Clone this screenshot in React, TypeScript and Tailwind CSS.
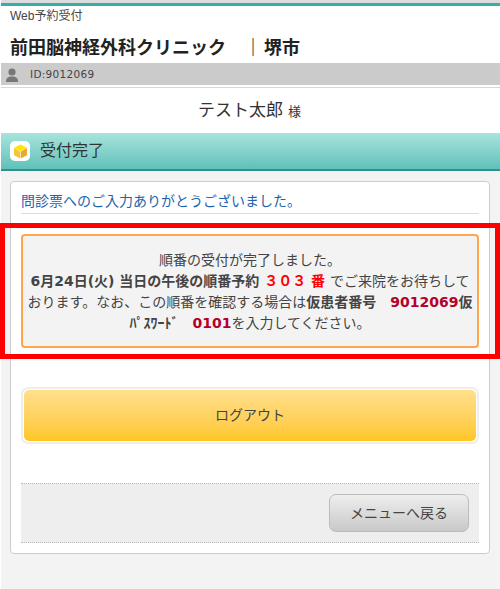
const jp = "font-['DejaVu_Sans','Noto_Sans_CJK_JP',sans-serif]";

const App = () => {
  return (
    <div className={`relative w-[500px] h-[589px] overflow-hidden bg-white pl-px text-[#333] ${jp}`}>
      <div className="flex h-full flex-col bg-[#f3f3f3]">
        {/* header */}
        <header className="bg-white">
          <div className="h-[6px] border-t-[3px] border-t-[#dcdcdc] bg-[#33aea8]" />
          <p className="h-[20px] pl-[9px] text-[12px] leading-[20px] text-[#444]">
            <span className="font-['Liberation_Sans']">Web</span>予約受付
          </p>
          <h1 className="h-[37px] pl-[9px] text-[18px] font-bold leading-[44px] text-[#222]">
            前田脳神経外科クリニック<span className="ml-[18px]">｜</span>
            <span className="ml-[2px]">堺市</span>
          </h1>
          <div className="flex h-[22px] items-center bg-[#cbcbcb]">
            <svg viewBox="0 0 14 14" className="ml-[4px] h-[14px] w-[14px] translate-y-[1px]">
              <circle cx="7" cy="4" r="3.6" fill="#777" />
              <path d="M1 14c0-4 2-5.500 6-5.500s6 1.500 6 5.500z" fill="#777" />
            </svg>
            <span className="ml-[11px] translate-y-[1px] text-[10.500px] tracking-[0.3px] text-[#444]">
              ID:9012069
            </span>
          </div>
          <div className="h-[2px] bg-white" />
          <div className="h-px bg-[#d8d8d8]" />
          <div className="flex h-[45px] items-center justify-center pr-[2px] text-[17px] text-[#333]">
            テスト太郎<span className="ml-[5px] translate-y-[1px] text-[13px]">様</span>
          </div>
        </header>

        {/* section title */}
        <div className="flex h-[38px] items-center border-b-[2px] border-b-[#2c928c] bg-gradient-to-b from-[#a7e4dd] to-[#5fc1ba] pl-[9px]">
          <span className="flex h-[20px] w-[20px] items-center justify-center rounded-[5px] bg-white">
            <svg viewBox="0 0 14 14" className="h-[15px] w-[15px]">
              <path d="M7 .5 13 3.500 7 6.800 1 3.500z" fill="#ffe600" />
              <path d="M1 3.800 6.700 7v6.500L1 10.500z" fill="#f7c531" />
              <path d="M13 3.800 7.300 7v6.500l5.700-3z" fill="#e8a92a" />
            </svg>
          </span>
          <span className="ml-[10px] text-[16px] text-[#333]">受付完了</span>
        </div>

        {/* card */}
        <main className="ml-[9px] mr-[10px] mt-[10px] flex h-[373px] flex-col rounded-[4px] border border-[#ccc] bg-white px-[10px]">
          <p className="mt-[9px] h-[23px] border-b border-b-[#ddd] text-[14px] leading-[20px] text-[#1f63ad]">
            問診票へのご入力ありがとうございました。
          </p>
          <div className="mt-[20px] h-[114px] rounded-[4px] border-2 border-[#ffa64d] bg-[#f3f3f3] px-[3px] pt-[14px] text-center text-[14px] leading-[21px] text-[#444]">
            順番の受付が完了しました。
            <br />
            <b>6月24日(火) 当日の午後の順番予約</b>
            <b className="text-[#ff0000]"> ３０３ 番 </b>でご来院をお待ちしております。なお、この順番を確認する場合は
            <b>仮患者番号</b>
            <b className="text-[#b5002a]">　9012069</b>
            <b>仮ﾊﾟｽﾜｰﾄﾞ</b>
            <b className="text-[#b5002a]">　0101</b>を入力してください。
          </div>
          <button className="mt-[39px] h-[57px] rounded-[7px] border-2 border-[#eee] bg-white p-px">
            <span className="flex h-full items-center justify-center rounded-[5px] bg-gradient-to-b from-[#ffe08a] to-[#ffc61e] text-[14px] text-[#444]">
              ログアウト
            </span>
          </button>
          <div className="mt-[39px] flex h-[60px] items-center justify-end border-y border-dotted border-[#bbb] bg-[#eeeeee] pr-[10px]">
            <button className="h-[38px] w-[140px] rounded-[7px] border border-[#bbb] bg-gradient-to-b from-[#eeeeee] to-[#c9c9c9] text-[14px] text-[#444]">
              メニューへ戻る
            </button>
          </div>
        </main>
      </div>

      {/* red annotation frame */}
      <div className="pointer-events-none absolute left-0 top-[223px] h-[136px] w-[500px] border-[5px] border-[#ff0000]" />
    </div>
  );
};

export default App;
